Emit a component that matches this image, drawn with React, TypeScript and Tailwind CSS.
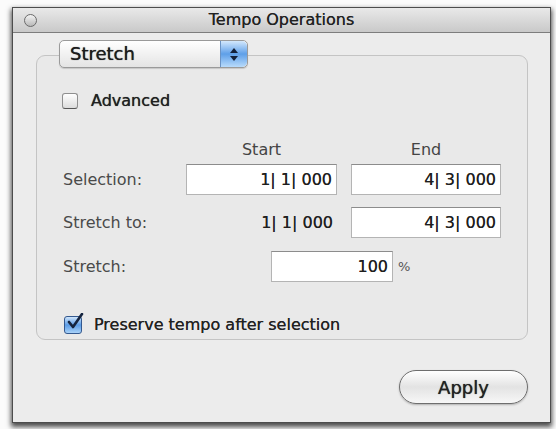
import React from "react";

const font = { fontFamily: '"DejaVu Sans", "Liberation Sans", sans-serif' };

function Field({ value, w }: { value: string; w: string }) {
  return (
    <div
      className={`${w} h-[31px] bg-white border border-[#b4b4b4] border-t-[#8c8c8c] flex items-center justify-end pr-[4px] text-[16px] text-[#1e1e1e] [text-shadow:0_0_0.5px_#444]`}
    >
      {value}
    </div>
  );
}

export default function App() {
  return (
    <div className="w-[556px] h-[429px] bg-[#fbfbfb] overflow-hidden" style={font}>
      <div className="pt-[7px] pl-[12px]">
        <div className="w-[539px] h-[416px] border border-[#4d4d4d] bg-[#ececec] shadow-[0_3px_5px_1px_rgba(0,0,0,0.7)] flex flex-col">
          {/* Title bar */}
          <div className="h-[25px] shrink-0 border-b border-[#7d7d7d] bg-gradient-to-b from-[#e9e9e9] to-[#c9c9c9] flex items-center relative">
            <div className="ml-[11px] w-[13px] h-[13px] rounded-full border border-[#6a6a6a] bg-gradient-to-b from-[#f4f4f4] to-[#b9b9b9]" />
            <div className="absolute inset-0 flex items-center justify-center text-[16px] text-[#222] [text-shadow:0_0_0.6px_#333]">
              Tempo Operations
            </div>
          </div>

          {/* Content */}
          <div className="flex-1 flex flex-col pl-[23px] pr-[22px]">
            {/* Group box */}
            <div className="mt-[22px] h-[285px] rounded-[9px] border border-[#c4c4c4] bg-[#e9e9e9] pl-[25px] flex flex-col">
              {/* Popup */}
              <div className="-mt-[16px] -ml-[3px] w-[189px] h-[28px] rounded-[5px] border border-[#9a9a9a] bg-gradient-to-b from-[#ffffff] to-[#e4e4e4] flex items-center shadow-[0_1px_1px_rgba(0,0,0,0.15)]">
                <span className="pl-[10px] flex-1 text-[18px] text-[#1c1c1c] leading-none [text-shadow:0_0_0.8px_#222]">Stretch</span>
                <div className="w-[27px] h-full rounded-r-[5px] bg-gradient-to-b from-[#d3e8fc] via-[#5e9fe8] to-[#b8dbfb] border-l border-[#6b93c4] flex flex-col items-center justify-center gap-[3px]">
                  <svg width="8" height="5" viewBox="0 0 8 5"><path d="M4 0 L8 5 L0 5 Z" fill="#14213a" /></svg>
                  <svg width="8" height="5" viewBox="0 0 8 5"><path d="M0 0 L8 0 L4 5 Z" fill="#14213a" /></svg>
                </div>
              </div>

              {/* Advanced */}
              <div className="mt-[24px] flex items-center h-[17px]">
                <div className="w-[16px] h-[16px] rounded-[3px] border border-[#8f8f8f] border-b-[#555] bg-gradient-to-b from-[#ffffff] to-[#dcdcdc]" />
                <span className="ml-[13px] text-[16px] text-[#202020] [text-shadow:0_0_0.7px_#333]">Advanced</span>
              </div>

              {/* Headers */}
              <div className="mt-[31px] flex h-[20px] items-center text-[16px] text-[#444]">
                <div className="w-[124px]" />
                <div className="w-[151px] text-center">Start</div>
                <div className="w-[14px]" />
                <div className="w-[150px] text-center">End</div>
              </div>

              {/* Selection */}
              <div className="mt-[4px] flex items-center text-[16px]">
                <div className="w-[124px] text-[#4a4a4a] pl-[1px]">Selection:</div>
                <Field value="1| 1| 000" w="w-[151px]" />
                <div className="w-[14px]" />
                <Field value="4| 3| 000" w="w-[150px]" />
              </div>

              {/* Stretch to */}
              <div className="mt-[12px] flex items-center text-[16px]">
                <div className="w-[124px] text-[#4a4a4a] pl-[1px]">Stretch to:</div>
                <div className="w-[151px] h-[31px] flex items-center justify-end pr-[4px] text-[#1e1e1e] [text-shadow:0_0_0.5px_#444]">1| 1| 000</div>
                <div className="w-[14px]" />
                <Field value="4| 3| 000" w="w-[150px]" />
              </div>

              {/* Stretch */}
              <div className="mt-[13px] flex items-center text-[16px]">
                <div className="w-[124px] text-[#4a4a4a] pl-[1px]">Stretch:</div>
                <div className="w-[85px]" />
                <Field value="100" w="w-[122px]" />
                <span className="ml-[5px] text-[13px] text-[#555]">%</span>
              </div>

              {/* Preserve */}
              <div className="mt-[33px] flex items-center h-[19px]">
                <div className="relative ml-[2px] w-[18px] h-[18px] rounded-[3px] border border-[#34598f] bg-gradient-to-b from-[#cfe5fb] via-[#5b9ce6] to-[#a9d2f8]">
                  <svg className="absolute -top-[4px] left-[1px]" width="18" height="18" viewBox="0 0 18 18">
                    <path d="M3 9 L7 14 L16 1" stroke="#15243f" strokeWidth="2.6" fill="none" strokeLinecap="round" strokeLinejoin="round" />
                  </svg>
                </div>
                <span className="ml-[12px] text-[16px] text-[#222] [text-shadow:0_0_0.6px_#333]">Preserve tempo after selection</span>
              </div>
            </div>

            {/* Apply */}
            <div className="flex justify-end mt-[30px]">
              <div className="w-[129px] h-[34px] rounded-full border-[1.5px] border-[#6e6e6e] bg-gradient-to-b from-[#ffffff] via-[#e3e3e3] to-[#f7f7f7] flex items-center justify-center text-[18px] text-[#222] [text-shadow:0_0_0.8px_#222] shadow-[0_1px_2px_rgba(0,0,0,0.25)]">
                Apply
              </div>
            </div>
          </div>
        </div>
      </div>
    </div>
  );
}
